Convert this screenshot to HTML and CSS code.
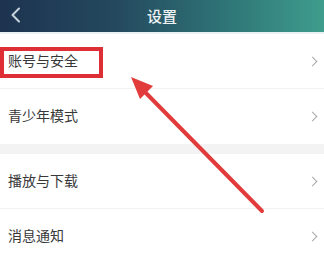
FILE: index.html
```html
<!DOCTYPE html>
<html lang="zh-CN">
<head>
<meta charset="utf-8">
<link rel="stylesheet" href="styles.css">
</head>
<body>
<div class="screen">
  <header class="topbar">
    <svg class="back" width="12" height="16" viewBox="0 0 12 16"><path d="M9 1.5 L2.5 8 L9 14.5" fill="none" stroke="#c9d3dc" stroke-width="2" stroke-linecap="round" stroke-linejoin="round"/></svg>
    <div class="title">设置</div>
  </header>
  <div class="list">
    <div class="row"><span class="label">账号与安全</span><span class="chev"></span></div>
    <div class="row"><span class="label">青少年模式</span><span class="chev"></span></div>
  </div>
  <div class="gap"></div>
  <div class="list">
    <div class="row"><span class="label">播放与下载</span><span class="chev"></span></div>
    <div class="row"><span class="label">消息通知</span><span class="chev"></span></div>
  </div>
  <div class="highlight"></div>
  <svg class="arrow" width="324" height="255" viewBox="0 0 324 255">
    <line x1="262" y1="211" x2="142" y2="89" stroke="#e23b3b" stroke-width="4" stroke-linecap="round"/>
    <polygon points="131,77 153,86 140,99" fill="#e23b3b"/>
  </svg>
</div>
</body>
</html>
```
FILE: styles.css
```css
html, body {
  margin: 0;
  padding: 0;
  background: #ffffff;
}
.screen {
  position: relative;
  width: 324px;
  height: 255px;
  overflow: hidden;
  font-family: "Noto Sans CJK SC", "Noto Sans", sans-serif;
}
.topbar {
  position: relative;
  height: 32px;
  display: flex;
  align-items: center;
  justify-content: center;
  background: linear-gradient(90deg, #1d3350 0%, #24485e 35%, #2f7577 70%, #3e9d8d 100%);
  border-bottom: 2px solid #e9f1f3;
}
.back {
  position: absolute;
  left: 10px;
  top: 7px;
}
.title {
  color: #eef3f4;
  font-size: 15px;
  font-weight: 500;
  margin-top: -1px;
}
.list {
  background: #fff;
}
.row {
  box-sizing: border-box;
  height: 55px;
  display: flex;
  align-items: center;
  justify-content: space-between;
  padding: 0 6px 3px 8px;
  border-bottom: 1px solid #f2f2f2;
}
.list .row:last-child {
  border-bottom: none;
}
.label {
  font-size: 14px;
  color: #383838;
}
.chev {
  width: 6px;
  height: 6px;
  border-top: 1.5px solid #a8a8a8;
  border-right: 1.5px solid #a8a8a8;
  transform: rotate(45deg);
  margin-right: 2px;
  margin-top: 3px;
}
.gap {
  height: 10px;
  background: #f3f3f4;
}
.highlight {
  position: absolute;
  left: 0;
  top: 47px;
  width: 95px;
  height: 23px;
  border: 4px solid #dd2f35;
}
.arrow {
  position: absolute;
  left: 0;
  top: 0;
}
```
